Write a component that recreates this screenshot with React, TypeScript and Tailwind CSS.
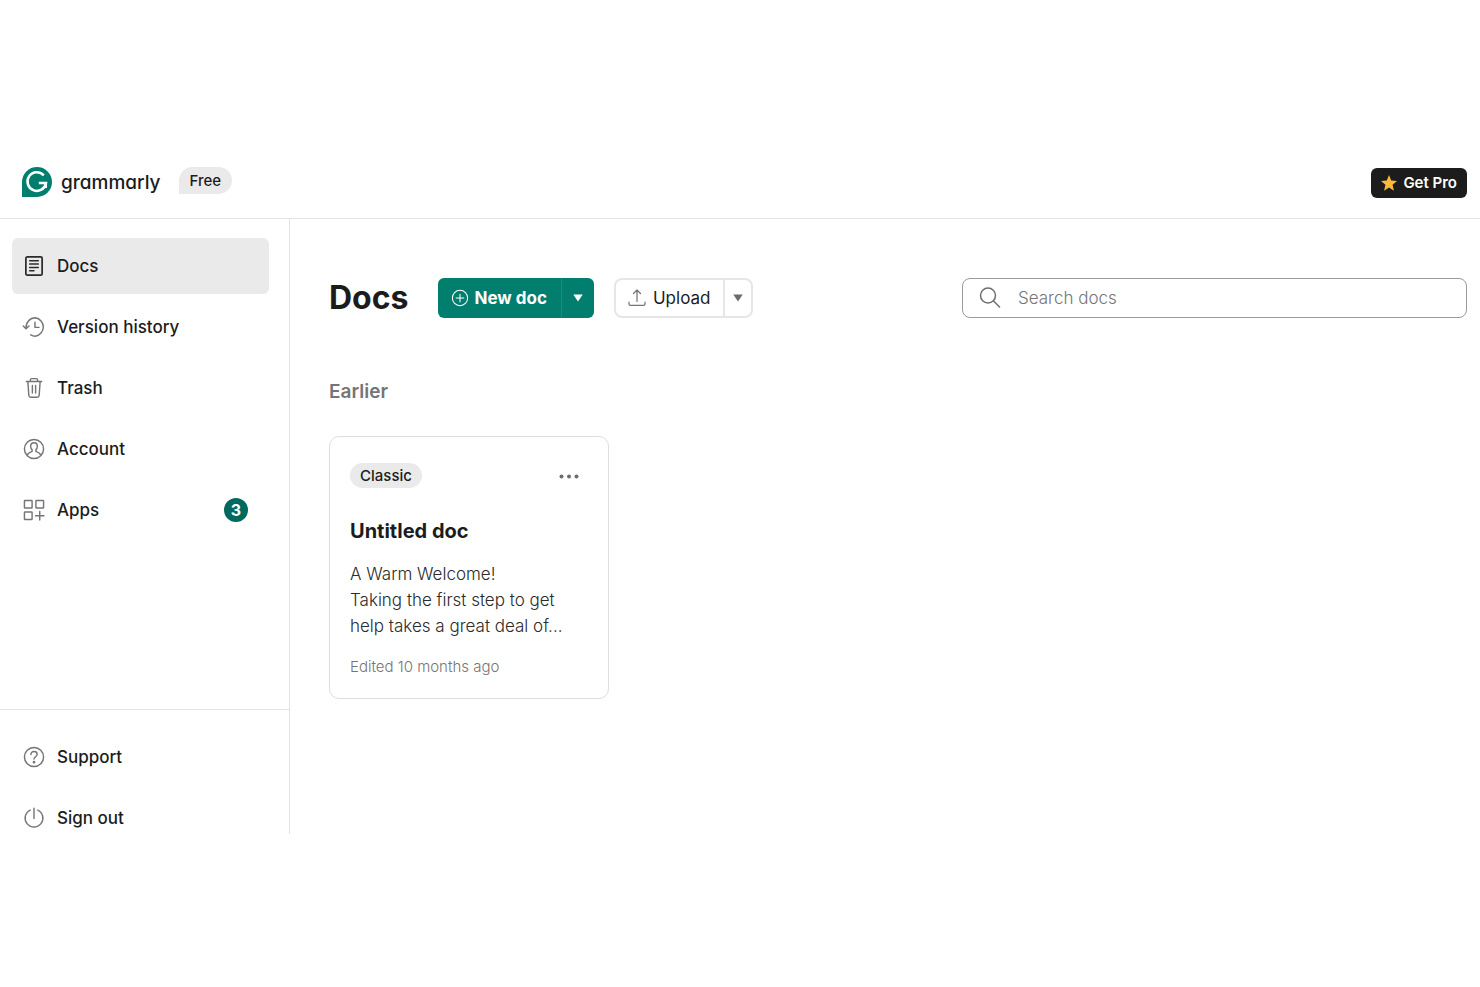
import type { ReactNode } from 'react';

interface NavItemProps {
  label: string;
  icon: ReactNode;
  active?: boolean;
  badge?: number;
}

function Icon({ children, className = 'h-[22px] w-[22px]' }: { children: ReactNode; className?: string }) {
  return (
    <svg
      className={`${className} flex-shrink-0 overflow-visible`}
      viewBox="0.5 0.5 23 23"
      fill="none"
      stroke="currentColor"
      strokeWidth={1.5}
      strokeLinecap="round"
      strokeLinejoin="round"
      aria-hidden="true"
    >
      {children}
    </svg>
  );
}

const docsIcon = (
  <Icon>
    <rect x="3.5" y="2.5" width="17" height="19" rx="1.5" strokeWidth={1.8} />
    <path d="M7.5 6.500h9M7.500 10h9M7.500 13.500h9M7.500 17h4.500" strokeWidth={1.6} />
  </Icon>
);

const historyIcon = (
  <Icon>
    <path d="M3.600 13.400C3.400 7 8 2.400 13.400 2.400A9.700 9.700 0 0 1 13.400 21.600c-1.800 0-3.400-.5-4.800-1.400" />
    <path d="M.8 11l2.800 2.800L6.800 11M13 7v5.400h4.200" />
  </Icon>
);

const trashIcon = (
  <Icon>
    <path d="M4 5.200h16M8.200 5V3.600c0-.8.6-1.400 1.400-1.400h4.800c.8 0 1.400.6 1.400 1.400V5" />
    <path d="M5.600 5.400l1 14.400c.1 1 .9 1.800 1.900 1.800h7c1 0 1.800-.8 1.900-1.800l1-14.400M10.300 9.300v8M13.700 9.300v8" />
  </Icon>
);

const accountIcon = (
  <Icon>
    <circle cx="12" cy="12" r="10" />
    <path d="M12 5.400c-2.200 0-3.500 1.600-3.500 3.700 0 1.500.5 2.700 1.500 3.500v1.900c-2.200.7-3.900 1.800-5 3.500M12 5.400c2.200 0 3.500 1.600 3.500 3.700 0 1.500-.5 2.700-1.500 3.500v1.900c2.200.7 3.900 1.800 5 3.500" />
  </Icon>
);

const appsIcon = (
  <Icon>
    <rect x="2" y="2" width="8" height="8" rx=".6" />
    <rect x="14" y="2" width="8" height="8" rx=".6" />
    <rect x="2" y="14" width="8" height="8" rx=".6" />
    <path d="M18 13.600v8.800M13.600 18h8.800" />
  </Icon>
);

const supportIcon = (
  <Icon>
    <circle cx="12" cy="12" r="10" />
    <path d="M8.800 9.400c0-1.900 1.400-3.100 3.200-3.100s3.300 1.200 3.300 2.900c0 2.500-3.300 2.600-3.300 5" />
    <circle cx="12" cy="17.400" r=".7" fill="currentColor" />
  </Icon>
);

const signOutIcon = (
  <Icon>
    <path d="M12 1.800v10.800M8 3.700a9.300 9.300 0 1 0 8 0" />
  </Icon>
);

function NavItem({ label, icon, active, badge }: NavItemProps) {
  return (
    <li>
      <a
        href="#"
        aria-current={active ? 'page' : undefined}
        className={`flex h-14 items-center gap-3 rounded-md pr-[21px] pl-[11px] text-[17px] leading-6 font-medium ${
          active ? 'bg-[#eaeaea]' : ''
        }`}
      >
        <span className={active ? 'text-[#2b2b2b]' : 'text-[#757575]'}>{icon}</span>
        <span className="flex-1">{label}</span>
        {badge && (
          <span className="flex h-6 w-6 items-center justify-center rounded-full bg-[#03695e] text-base font-bold text-white">
            {badge}
          </span>
        )}
      </a>
    </li>
  );
}

function Caret() {
  return (
    <svg className="h-2 w-2.5" viewBox="0 0 10 8" fill="currentColor" aria-hidden="true">
      <path d="M.3 .5h9.400L5 7.500z" />
    </svg>
  );
}

function Header() {
  return (
    <header className="flex items-center justify-between border-b border-[#e3e3e3] pt-[21px] pr-[13px] pb-[19px] pl-5">
      <div className="flex items-start">
        <a href="#" className="flex items-center gap-[9px]">
          <svg className="h-8 w-8" viewBox="0 0 32 32" aria-hidden="true">
            <path d="M2 30V15A15 15 0 1 1 17 30z" fill="#027e6f" />
            <path
              d="M23.800 8.400A9.300 9.300 0 1 0 26 16H18.800M25.900 15.800l-.2 5.200"
              fill="none"
              stroke="#fff"
              strokeWidth="2.500"
            />
          </svg>
          <span className="text-[19px] leading-7 font-medium [font-feature-settings:'cv11']">grammarly</span>
        </a>
        <span className="ml-[18px] rounded-full rounded-bl-none bg-[#eaeaea] px-[11px] text-[15px] leading-[27px] font-medium [font-feature-settings:'cv11']">
          Free
        </span>
      </div>
      <button
        type="button"
        className="flex h-[30px] items-center gap-1.5 rounded-md bg-[#1c1c1c] px-2.5 text-[15px] font-semibold text-white"
      >
        <svg className="h-4 w-4" viewBox="0 0 24 24" fill="#ffb938" aria-hidden="true">
          <path d="M12 0l3.300 8.300 8.700.6-6.700 5.700 2.100 8.900L12 18.700l-7.400 4.800 2.100-8.900L0 8.900l8.700-.6z" />
        </svg>
        Get Pro
      </button>
    </header>
  );
}

function Sidebar() {
  return (
    <nav className="flex w-[290px] flex-shrink-0 flex-col justify-between gap-[171px] border-r border-[#e3e3e3]">
      <ul className="space-y-[5px] pt-[19px] pr-5 pl-3">
        <NavItem label="Docs" icon={docsIcon} active />
        <NavItem label="Version history" icon={historyIcon} />
        <NavItem label="Trash" icon={trashIcon} />
        <NavItem label="Account" icon={accountIcon} />
        <NavItem label="Apps" icon={appsIcon} badge={3} />
      </ul>
      <ul className="-mb-3 space-y-[5px] border-t border-[#e3e3e3] pt-[19px] pr-5 pl-3">
        <NavItem label="Support" icon={supportIcon} />
        <NavItem label="Sign out" icon={signOutIcon} />
      </ul>
    </nav>
  );
}

function Toolbar() {
  return (
    <div className="flex items-center">
      <h1 className="text-[32px] leading-10 font-bold">Docs</h1>
      <div className="ml-[30px] flex h-10 overflow-hidden rounded-md bg-[#027e6f] text-white">
        <button
          type="button"
          className="flex items-center gap-1.5 border-r border-[#1a8c7e] px-3.5 text-[17px] leading-6 font-bold"
        >
          <Icon className="h-4 w-4">
            <circle cx="12" cy="12" r="11" />
            <path d="M12 6.500v11M6.500 12h11" />
          </Icon>
          New doc
        </button>
        <button type="button" aria-label="More new doc options" className="flex w-8 items-center justify-center">
          <Caret />
        </button>
      </div>
      <div className="ml-5 flex h-10 rounded-lg border-2 border-[#e6e6e6]">
        <button
          type="button"
          className="flex items-center gap-2 border-r-2 border-[#e6e6e6] px-[13px] text-[17px] leading-6"
        >
          <span className="text-[#757575]">
            <Icon className="h-4 w-4">
              <path d="M12 17V1M7 5.500L12 .5l5 5M.5 18v2.500c0 1.200.8 2 2 2h19c1.200 0 2-.8 2-2V18" strokeWidth={1.8} />
            </Icon>
          </span>
          Upload
        </button>
        <button
          type="button"
          aria-label="More upload options"
          className="flex w-[26px] items-center justify-center text-[#6b6b6b]"
        >
          <Caret />
        </button>
      </div>
      <label className="ml-auto flex h-10 w-[505px] items-center gap-[17px] rounded-lg border border-[#9b9b9b] px-4">
        <svg
          className="h-[22px] w-[22px]"
          viewBox="0 0 22 22"
          fill="none"
          stroke="#6f6f6f"
          strokeWidth="1.5"
          aria-hidden="true"
        >
          <circle cx="9" cy="8.500" r="7.500" />
          <path d="M14.300 13.800L21 20.500" />
        </svg>
        <input
          type="search"
          aria-label="Search docs"
          placeholder="Search docs"
          className="min-w-0 flex-1 text-[17px] leading-6 font-light outline-none placeholder:text-[#757575]"
        />
      </label>
    </div>
  );
}

function DocCard() {
  return (
    <article className="mt-[30px] w-[280px] rounded-[10px] border border-[#dedede] px-5 pt-[26px] pb-[19px]">
      <div className="flex items-center justify-between">
        <span className="rounded-full bg-[#eaeaea] px-2.5 text-[15px] leading-[25px] font-medium">Classic</span>
        <button type="button" aria-label="Document actions" className="mr-[9px] text-[#6b6b6b]">
          <svg className="h-5 w-5" viewBox="0 0 20 20" fill="currentColor" aria-hidden="true">
            <circle cx="2.5" cy="10.500" r="2" />
            <circle cx="10" cy="10.500" r="2" />
            <circle cx="17.5" cy="10.500" r="2" />
          </svg>
        </button>
      </div>
      <h3 className="mt-[27px] text-xl leading-8 font-bold">Untitled doc</h3>
      <p className="mt-3.5 text-[17px] leading-[26px] font-light text-[#2b2b2b]">
        A Warm Welcome!
        <br />
        Taking the first step to get
        <br />
        help takes a great deal of...
      </p>
      <p className="mt-4 text-[15px] leading-6 font-light text-[#757575]">Edited 10 months ago</p>
    </article>
  );
}

export default function App() {
  return (
    <div className="min-h-screen bg-white pt-[146px] font-[Inter,sans-serif] text-[#1c1c1c]">
      <Header />
      <div className="flex">
        <Sidebar />
        <main className="flex-1 pt-[59px] pr-[13px] pl-[39px]">
          <Toolbar />
          <section>
            <h2 className="mt-[60px] text-[19px] leading-7 font-semibold text-[#757575]">Earlier</h2>
            <DocCard />
          </section>
        </main>
      </div>
    </div>
  );
}
